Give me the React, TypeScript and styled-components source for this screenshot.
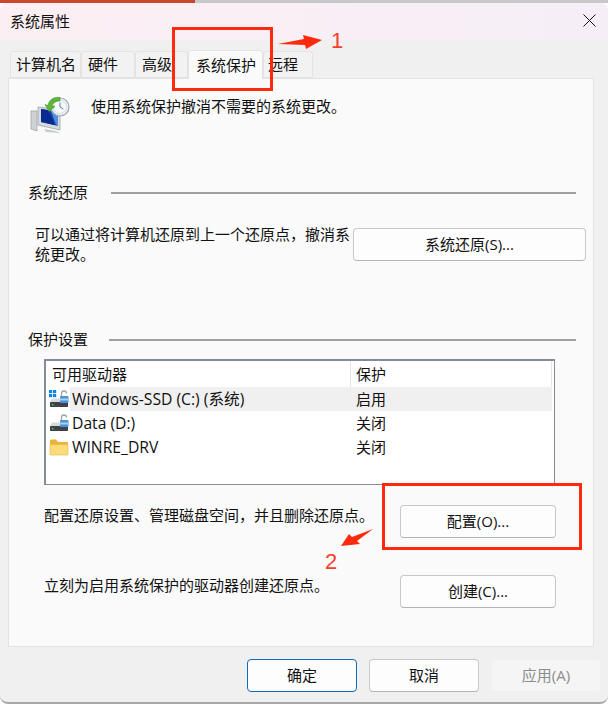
import styled, { createGlobalStyle } from "styled-components";

const GlobalStyle = createGlobalStyle`
  html, body {
    margin: 0;
    padding: 0;
    background: #fff;
  }
  * {
    box-sizing: border-box;
  }
`;

const FONT = `"Open Sans", "Noto Sans CJK SC", "Noto Sans", sans-serif`;

const Page = styled.div`
  position: relative;
  width: 608px;
  height: 706px;
  overflow: hidden;
  font-family: ${FONT};
  font-size: 15px;
  color: #111;
`;

const TopStripe = styled.div`
  display: flex;
  height: 3px;
`;

const StripePart = styled.div<{ $color: string; $grow?: boolean }>`
  background: ${(p) => p.$color};
  width: 195px;
  flex-grow: ${(p) => (p.$grow ? 1 : 0)};
`;

const Window = styled.div`
  height: 701px;
  background: #f0f0f0;
  border-radius: 8px;
  border-bottom: 2px solid #a8a8a8;
  overflow: hidden;
`;

const TitleBar = styled.div`
  display: flex;
  align-items: center;
  justify-content: space-between;
  height: 37px;
  padding: 0 12px 2px 10px;
  background: linear-gradient(90deg, #fbeff3, #f6eef7);
`;

const CloseIcon = styled.svg`
  width: 13px;
  height: 13px;
  display: block;
`;

const TabStrip = styled.div`
  display: flex;
  align-items: flex-end;
  height: 38px;
  padding-left: 10px;
`;

const Tab = styled.div<{ $width: number; $inset: number; $active?: boolean }>`
  display: flex;
  align-items: center;
  width: ${(p) => p.$width}px;
  height: ${(p) => (p.$active ? 29 : 27)}px;
  padding: 0 0 2px ${(p) => p.$inset}px;
  white-space: nowrap;
  background: ${(p) => (p.$active ? "#fafafa" : "#f2f2f2")};
  border: 1px solid #e3e3e3;
  border-bottom: ${(p) => (p.$active ? "none" : "1px solid #e3e3e3")};
  border-radius: 3px 3px 0 0;
  margin-bottom: ${(p) => (p.$active ? -1 : 0)}px;
  position: relative;
  z-index: ${(p) => (p.$active ? 1 : 0)};
`;

const Panel = styled.div`
  height: 569px;
  margin: 0 14px 0 8px;
  padding: 0 17px 0 19px;
  background: #fafafa;
  border: 1px solid #e2e2e2;
`;

const Intro = styled.div`
  display: flex;
  align-items: flex-start;
  gap: 21px;
  height: 99px;
  padding: 17px 0 0 2px;
`;

const IntroText = styled.div`
  line-height: 22px;
  margin-top: -1px;
`;

const GroupHeading = styled.div<{ $gap: number }>`
  display: flex;
  align-items: center;
  gap: ${(p) => p.$gap}px;
  height: 30px;

  &::after {
    content: "";
    flex: 1;
    height: 2px;
    background: #a0a0a0;
  }
`;

const HeadingLabel = styled.span`
  line-height: 20px;
  padding-bottom: 3px;
`;

const RestoreRow = styled.div`
  display: flex;
  align-items: center;
  justify-content: space-between;
  margin: 16px -10px 61px 7px;
  height: 40px;
`;

const RestoreText = styled.div`
  width: 318px;
  line-height: 20px;
`;

const Btn = styled.button<{ $width: number; $primary?: boolean; $disabled?: boolean }>`
  width: ${(p) => p.$width}px;
  height: 33px;
  padding: 0 0 2px;
  font-family: ${FONT};
  font-size: 15px;
  color: ${(p) => (p.$disabled ? "#8c8c8c" : "#111")};
  background: ${(p) => (p.$disabled ? "#f5f5f5" : "#fdfdfd")};
  border: 1px solid ${(p) => (p.$primary ? "#0f6cbd" : p.$disabled ? "#f0f0f0" : "#c8c8c8")};
  border-bottom-color: ${(p) => (p.$primary ? "#0f6cbd" : p.$disabled ? "#f0f0f0" : "#b4b4b4")};
  border-radius: 4px;
`;

const DriveList = styled.div`
  height: 126px;
  margin: 4px 21px 0 16px;
  padding: 0 2px 0 0;
  background: #fff;
  border: 2px solid #868c96;
  border-right-width: 1px;
  border-bottom-width: 1px;
`;

const Cells = styled.div`
  display: grid;
  grid-template-columns: 304px 1fr;
`;

const HeaderCell = styled.div<{ $divided?: boolean }>`
  height: 26px;
  line-height: 26px;
  padding-left: ${(p) => (p.$divided ? 5 : 6)}px;
  border-left: ${(p) => (p.$divided ? "1px solid #e6e6e6" : "none")};
  border-right: ${(p) => (p.$divided ? "1px solid #e6e6e6" : "none")};
`;

const Row = styled.div`
  display: grid;
  grid-template-columns: 24px 280px 1fr;
  height: 24px;
  line-height: 24px;
`;

const IconCell = styled.div`
  display: flex;
  align-items: center;
  justify-content: flex-end;
  padding-right: 1px;
  background: #fff;
`;

const NameCell = styled.div<{ $selected?: boolean }>`
  padding-left: 2px;
  font-size: 15.7px;
  background: ${(p) => (p.$selected ? "#f0f0f0" : "#fff")};
`;

const StateCell = styled.div<{ $selected?: boolean }>`
  padding-left: 6px;
  background: ${(p) => (p.$selected ? "#f0f0f0" : "#fff")};
`;

const ActionRow = styled.div<{ $top: number }>`
  display: flex;
  align-items: flex-start;
  justify-content: space-between;
  height: 33px;
  margin: ${(p) => p.$top}px 21px 0 16px;
  line-height: 20px;
`;

const ActionBtn = styled(Btn)`
  margin-right: -1px;
`;

const Footer = styled.div`
  display: flex;
  justify-content: flex-end;
  gap: 12px;
  padding: 12px 7px 0 0;
`;

const RedBox = styled.div<{ $x: number; $y: number; $w: number; $h: number }>`
  position: absolute;
  left: ${(p) => p.$x}px;
  top: ${(p) => p.$y}px;
  width: ${(p) => p.$w}px;
  height: ${(p) => p.$h}px;
  border: 3px solid #ff2a0e;
  z-index: 5;
`;

const Mark = styled.div<{ $x: number; $y: number }>`
  position: absolute;
  left: ${(p) => p.$x}px;
  top: ${(p) => p.$y}px;
  font-family: "Liberation Sans", sans-serif;
  font-size: 22px;
  line-height: 22px;
  color: #f4402a;
  z-index: 5;
`;

const Arrow = styled.svg<{ $x: number; $y: number }>`
  position: absolute;
  left: ${(p) => p.$x}px;
  top: ${(p) => p.$y}px;
  z-index: 5;
`;

function RestoreIcon() {
  return (
    <svg width="40" height="38" viewBox="0 0 40 38">
      <path d="M1 15h6v20l-6-2z" fill="#cfd2d4" stroke="#9aa0a3" strokeWidth="0.7" />
      <path d="M8 11l22 3v20l-22-5z" fill="#d7dbde" stroke="#9ba3a8" strokeWidth="0.8" />
      <path d="M11 13l17 3v14l-17-4z" fill="#1a3fa6" />
      <path d="M11 13l7 1 7 15-14-3z" fill="#0a2a92" />
      <path d="M21 15l7 1v14l-2-1z" fill="#4c8fe0" />
      <path d="M14 33l12 2 4 2-14-1z" fill="#c7cbce" />
      <circle cx="30" cy="11" r="9" fill="#e9eef3" stroke="#9aa8b4" strokeWidth="1.2" />
      <circle cx="30" cy="11" r="6.4" fill="#f7fafc" stroke="#c4ced6" strokeWidth="0.6" />
      <path d="M30 6.500V11l3.400 2" fill="none" stroke="#5f7d97" strokeWidth="1" />
      <path d="M30 1.500c-6-1-11 2-12 8l-3-1 4 7 6-5-3-.8c1-3 4-5 8-4.700z" fill="#5fb53a" stroke="#3f8f2a" strokeWidth="0.5" />
    </svg>
  );
}

function DriveIcon({ windows }: { windows?: boolean }) {
  return (
    <svg width="20" height="18" viewBox="0 0 20 18">
      {windows && (
        <g fill="#0a84e0">
          <rect x="0" y="0" width="3.200" height="3.200" />
          <rect x="4" y="0" width="3.200" height="3.200" />
          <rect x="0" y="4" width="3.200" height="3.200" />
          <rect x="4" y="4" width="3.200" height="3.200" />
        </g>
      )}
      <path d="M3 8.500h14l2 3.500H1z" fill="#d8dadc" />
      <rect x="1" y="12" width="18" height="5" rx="0.800" fill="#3f4347" />
      <rect x="3" y="14" width="1.500" height="1.500" fill="#43d14f" />
      <path d="M12.500 6V3.500a2.500 2.500 0 0 1 5 0" fill="none" stroke="#9fa4a8" strokeWidth="1.300" />
      <rect x="11" y="6" width="8.500" height="7" rx="0.800" fill="#4b93d6" />
      <rect x="11" y="8.500" width="8.500" height="2" fill="#a9d0ee" />
    </svg>
  );
}

function FolderIcon() {
  return (
    <svg width="20" height="18" viewBox="0 0 20 18">
      <path d="M1 2.500a1 1 0 0 1 1-1h5l2 2.500h9a1 1 0 0 1 1 1V16a1 1 0 0 1-1 1H2a1 1 0 0 1-1-1z" fill="#e9b43c" />
      <path d="M1 6.500h18V16a1 1 0 0 1-1 1H2a1 1 0 0 1-1-1z" fill="#fbdc78" stroke="#e6b645" strokeWidth="0.600" />
    </svg>
  );
}

const tabs = [
  { label: "计算机名", width: 71, inset: 5 },
  { label: "硬件", width: 54, inset: 6 },
  { label: "高级", width: 53, inset: 6 },
  { label: "系统保护", width: 75, inset: 7, active: true },
  { label: "远程", width: 50, inset: 4 },
];

const drives = [
  { name: "Windows-SSD (C:) (系统)", state: "启用", icon: <DriveIcon windows />, selected: true },
  { name: "Data (D:)", state: "关闭", icon: <DriveIcon /> },
  { name: "WINRE_DRV", state: "关闭", icon: <FolderIcon /> },
];

export default function App() {
  return (
    <Page>
      <GlobalStyle />
      <TopStripe>
        <StripePart $color="#c9472f" />
        <StripePart $color="#c8c8c8" $grow />
      </TopStripe>
      <Window>
        <TitleBar>
          <span>系统属性</span>
          <CloseIcon viewBox="0 0 13 13">
            <path d="M.5.500l12 12M12.500.500l-12 12" stroke="#111" strokeWidth="1" fill="none" />
          </CloseIcon>
        </TitleBar>
        <TabStrip>
          {tabs.map((tab) => (
            <Tab key={tab.label} $width={tab.width} $inset={tab.inset} $active={tab.active}>
              {tab.label}
            </Tab>
          ))}
        </TabStrip>
        <Panel>
          <Intro>
            <RestoreIcon />
            <IntroText>使用系统保护撤消不需要的系统更改。</IntroText>
          </Intro>
          <GroupHeading $gap={23}>
            <HeadingLabel>系统还原</HeadingLabel>
          </GroupHeading>
          <RestoreRow>
            <RestoreText>可以通过将计算机还原到上一个还原点，撤消系统更改。</RestoreText>
            <Btn $width={233}>系统还原(S)...</Btn>
          </RestoreRow>
          <GroupHeading $gap={21}>
            <HeadingLabel>保护设置</HeadingLabel>
          </GroupHeading>
          <DriveList>
            <Cells>
              <HeaderCell>可用驱动器</HeaderCell>
              <HeaderCell $divided>保护</HeaderCell>
            </Cells>
            {drives.map((drive) => (
              <Row key={drive.name}>
                <IconCell>{drive.icon}</IconCell>
                <NameCell $selected={drive.selected}>{drive.name}</NameCell>
                <StateCell $selected={drive.selected}>{drive.state}</StateCell>
              </Row>
            ))}
          </DriveList>
          <ActionRow $top={20}>
            <div>配置还原设置、管理磁盘空间，并且删除还原点。</div>
            <ActionBtn $width={156}>配置(O)...</ActionBtn>
          </ActionRow>
          <ActionRow $top={37}>
            <div>立刻为启用系统保护的驱动器创建还原点。</div>
            <ActionBtn $width={156}>创建(C)...</ActionBtn>
          </ActionRow>
        </Panel>
        <Footer>
          <Btn $width={110} $primary>确定</Btn>
          <Btn $width={110}>取消</Btn>
          <Btn $width={110} $disabled>应用(A)</Btn>
        </Footer>
      </Window>

      <RedBox $x={172} $y={27} $w={101} $h={64} />
      <RedBox $x={382} $y={483} $w={200} $h={67} />
      <Arrow $x={278} $y={32} width="46" height="20" viewBox="0 0 46 20">
        <path d="M0 12L26 7L25 3L44 8L28 17L27 13Z" fill="#ff2a0e" />
      </Arrow>
      <Mark $x={331} $y={30}>1</Mark>
      <Arrow $x={340} $y={528} width="36" height="20" viewBox="0 0 36 20">
        <path d="M1 18l8-12 3 3L33 1 17 13l3 3z" fill="#ff2a0e" />
      </Arrow>
      <Mark $x={325} $y={551}>2</Mark>
    </Page>
  );
}
